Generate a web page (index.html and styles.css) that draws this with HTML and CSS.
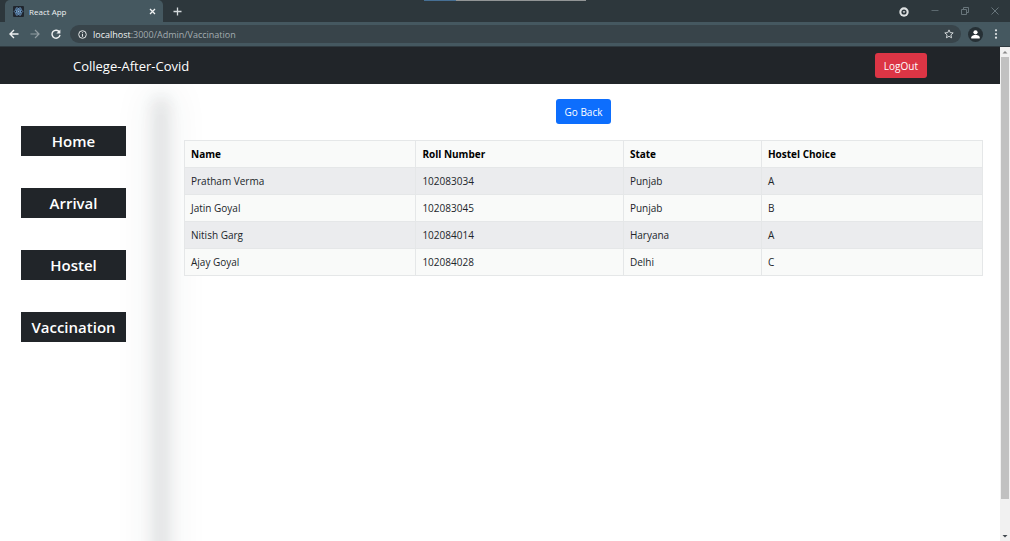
FILE: index.html
```html
<!DOCTYPE html>
<html lang="en">
<head>
<meta charset="utf-8">
<title>React App</title>
<link rel="stylesheet" href="styles.css">
</head>
<body>
<div class="window">
  <div class="tabstrip">
    <div class="tab">
      <svg class="favicon" width="11" height="11" viewBox="0 0 22 22" aria-hidden="true">
        <rect width="22" height="22" rx="2" fill="#20262e"/>
        <g fill="none" stroke="#6f9fd0" stroke-width="1.5">
          <ellipse cx="11" cy="11" rx="8.5" ry="3.4"/>
          <ellipse cx="11" cy="11" rx="8.5" ry="3.4" transform="rotate(60 11 11)"/>
          <ellipse cx="11" cy="11" rx="8.5" ry="3.4" transform="rotate(120 11 11)"/>
        </g>
        <circle cx="11" cy="11" r="1.8" fill="#8fbbe6"/>
      </svg>
      <span class="tab-title">React App</span>
      <button class="icon-btn" aria-label="Close tab">
        <svg width="7" height="7" viewBox="0 0 7 7"><path d="M1 1l5 5M6 1L1 6" stroke="#f0f2f3" stroke-width="1.3"/></svg>
      </button>
    </div>
    <button class="icon-btn new-tab" aria-label="New tab">
      <svg width="9" height="9" viewBox="0 0 9 9"><path d="M4.5 .5v8M.5 4.5h8" stroke="#d5dadd" stroke-width="1.3"/></svg>
    </button>
    <div class="loader"></div>
    <div class="window-controls">
      <button class="icon-btn" aria-label="Search tabs">
        <svg width="10" height="10" viewBox="0 0 10 10"><circle cx="5" cy="5" r="4.7" fill="#dfe2e3"/><circle cx="5" cy="5" r="2.600" fill="#2d373c"/><path d="M3.600 4.300h2.800L5 6.200z" fill="#dfe2e3"/></svg>
      </button>
      <button class="icon-btn" aria-label="Minimize">
        <svg width="8" height="8" viewBox="0 0 8 8"><path d="M.5 3.5h7" stroke="#5c696f"/></svg>
      </button>
      <button class="icon-btn" aria-label="Restore">
        <svg width="8" height="8" viewBox="0 0 8 8" fill="none" stroke="#68757b"><path d="M.5 2.5h5v5h-5zM2.5 2.5v-2h5v5h-2"/></svg>
      </button>
      <button class="icon-btn" aria-label="Close window">
        <svg width="8" height="8" viewBox="0 0 8 8"><path d="M.5 .5l7 7M7.5 .5l-7 7" stroke="#68757b"/></svg>
      </button>
    </div>
  </div>

  <div class="toolbar">
    <button class="icon-btn" aria-label="Back">
      <svg width="10" height="10" viewBox="0 0 10 10" fill="none" stroke="#eef0f1" stroke-width="1.4"><path d="M9.5 5H1.2M5 1L1 5l4 4"/></svg>
    </button>
    <button class="icon-btn" aria-label="Forward">
      <svg width="10" height="10" viewBox="0 0 10 10" fill="none" stroke="#929da2" stroke-width="1.2"><path d="M.5 5h8.3M5 1l4 4-4 4"/></svg>
    </button>
    <button class="icon-btn" aria-label="Reload">
      <svg width="10" height="10" viewBox="0 0 10 10"><path d="M8.4 3A4 4 0 1 0 9 5.8" fill="none" stroke="#eef0f1" stroke-width="1.4"/><path d="M9.4 .4v4H5.4z" fill="#eef0f1"/></svg>
    </button>
    <div class="address">
      <svg width="9" height="9" viewBox="0 0 9 9" aria-hidden="true"><circle cx="4.5" cy="4.5" r="3.8" fill="none" stroke="#e2e5e6"/><path d="M4.5 4v2.8M4.5 2.2v1" stroke="#e2e5e6" stroke-width="1.1"/></svg>
      <span class="url"><span class="host">localhost</span>:3000/Admin/Vaccination</span>
      <button class="icon-btn" aria-label="Bookmark">
        <svg width="10" height="10" viewBox="0 0 10 10"><path d="M5 .9l1.2 2.7 3 .3-2.3 2 .7 2.9L5 7.3 2.4 8.8l.7-2.9-2.3-2 3-.3z" fill="none" stroke="#cfd4d6"/></svg>
      </button>
    </div>
    <button class="icon-btn" aria-label="Profile">
      <svg width="15" height="15" viewBox="0 0 15 15"><circle cx="7.5" cy="7.5" r="7.5" fill="#263035"/><circle cx="7.5" cy="5.3" r="2.1" fill="#fff"/><path d="M3.3 11.5V10.200c0-1.600 2.800-2.200 4.200-2.200s4.200.6 4.200 2.200v1.300z" fill="#fff"/></svg>
    </button>
    <button class="icon-btn" aria-label="Menu">
      <svg width="4" height="10" viewBox="0 0 4 10" fill="#e3e6e7"><circle cx="2" cy="1.300" r="1.100"/><circle cx="2" cy="5" r="1.100"/><circle cx="2" cy="8.700" r="1.100"/></svg>
    </button>
  </div>

  <div class="viewport">
    <div class="page">
      <header class="navbar">
        <a class="brand" href="#">College-After-Covid</a>
        <button class="btn btn-danger">LogOut</button>
      </header>
      <div class="content">
        <nav class="sidebar">
          <a href="#">Home</a>
          <a href="#">Arrival</a>
          <a href="#">Hostel</a>
          <a href="#">Vaccination</a>
        </nav>
        <div class="divider"></div>
        <main class="main">
          <button class="btn btn-primary">Go Back</button>
          <table class="students">
            <colgroup><col class="col-name"><col class="col-roll"><col class="col-state"><col class="col-hostel"></colgroup>
            <thead>
              <tr><th>Name</th><th>Roll Number</th><th>State</th><th>Hostel Choice</th></tr>
            </thead>
            <tbody>
              <tr><td>Pratham Verma</td><td>102083034</td><td>Punjab</td><td>A</td></tr>
              <tr><td>Jatin Goyal</td><td>102083045</td><td>Punjab</td><td>B</td></tr>
              <tr><td>Nitish Garg</td><td>102084014</td><td>Haryana</td><td>A</td></tr>
              <tr><td>Ajay Goyal</td><td>102084028</td><td>Delhi</td><td>C</td></tr>
            </tbody>
          </table>
        </main>
      </div>
    </div>
    <div class="scrollbar" aria-hidden="true">
      <svg class="arrow" width="10" height="10" viewBox="0 0 10 10"><path d="M2.500 6.500L5 4l2.500 2.500z" fill="#8a8a8a"/></svg>
      <div class="thumb"></div>
      <svg class="arrow" width="10" height="10" viewBox="0 0 10 10"><path d="M2.500 4L5 6.500 7.500 4z" fill="#40484e"/></svg>
    </div>
  </div>
</div>
</body>
</html>
```

FILE: styles.css
```css
* { box-sizing: border-box; }

body {
  margin: 0;
  font-family: "Open Sans", "Noto Sans", sans-serif;
  font-size: 10px;
  color: #212529;
  background: #fff;
}

a { color: inherit; text-decoration: none; }

.window {
  display: flex;
  flex-direction: column;
  height: 100vh;
}

.icon-btn {
  display: flex;
  flex: none;
  padding: 0;
  border: 0;
  background: none;
}

/* Browser chrome */
.tabstrip {
  position: relative;
  display: flex;
  align-items: center;
  height: 22px;
  padding: 0 11px 0 5px;
  background: #2d373c;
}

.tab {
  display: flex;
  align-items: center;
  gap: 5px;
  width: 158px;
  height: 22px;
  padding: 0 7px 0 8px;
  border-radius: 5px 5px 0 0;
  background: #455860;
  color: #eef1f2;
  font-size: 8px;
}

.tab-title { flex: 1; }

.new-tab { margin-left: 10px; }

.loader {
  position: absolute;
  top: 0;
  left: 42%;
  width: 16%;
  height: 1px;
  background: linear-gradient(90deg, #466f94 20%, #929596 20%);
}

.window-controls {
  display: flex;
  align-items: center;
  gap: 22px;
  margin-left: auto;
  height: 20px;
}

.window-controls .icon-btn:first-child { padding-top: 2px; }

.toolbar {
  display: flex;
  align-items: center;
  gap: 11px;
  height: 25px;
  padding: 0 12px 0 9px;
  background: #455860;
  border-bottom: 1px solid #303b41;
}

.address {
  display: flex;
  flex: 1;
  align-items: center;
  gap: 6px;
  height: 18px;
  margin-left: -2px;
  margin-right: -4px;
  padding: 0 7px 0 8px;
  border-radius: 9px;
  background: #38444a;
}

.url { flex: 1; font-size: 9px; color: #a3acb0; }
.host { color: #f1f3f4; }

/* Page */
.viewport { display: flex; flex: 1; min-height: 0; }

.page {
  display: flex;
  flex: 1;
  flex-direction: column;
  overflow: hidden;
}

.navbar {
  position: relative;
  z-index: 1;
  display: flex;
  align-items: center;
  justify-content: space-between;
  height: 37px;
  padding: 0 73px;
  background: #212529;
}

.brand { color: #fff; font-size: 13px; }

.btn {
  height: 25px;
  padding: 0 9px;
  border: 0;
  border-radius: 3px;
  color: #fff;
  font: 10px "Open Sans", "Noto Sans", sans-serif;
}

.btn-danger { background: #dc3545; }
.btn-primary { background: #0d6efd; }

.content { display: flex; flex: 1; }

.sidebar {
  display: flex;
  flex-direction: column;
  gap: 32px;
  width: 147px;
  padding: 42px 21px;
}

.sidebar a {
  height: 30px;
  background: #212529;
  color: #fff;
  font-size: 15px;
  font-weight: 600;
  line-height: 31px;
  text-align: center;
}

.divider {
  width: 0;
  margin: 20px 23px -40px 14px;
  box-shadow: 0 0 16px 6px rgba(33, 37, 50, 0.13), 0 0 36px 12px rgba(40, 70, 60, 0.08);
}

.main {
  position: relative;
  display: flex;
  flex: 1;
  flex-direction: column;
  align-items: center;
  gap: 16px;
  padding: 15px 17px 0 0;
}

.students {
  width: 100%;
  table-layout: fixed;
  border-collapse: collapse;
  background: #f9faf9;
}

.col-name { width: 29%; }
.col-roll { width: 26%; }
.col-state { width: 17.3%; }
.col-hostel { width: 27.7%; }

.students th,
.students td {
  height: 27px;
  padding: 0 6px;
  border: 1px solid #e5e7e8;
  text-align: left;
}

.students th { font-weight: 700; color: #000; }
.students tbody tr:nth-child(odd) { background: #ebecee; }

.scrollbar {
  display: flex;
  flex-direction: column;
  width: 10px;
  background: #f1f1f1;
}

.arrow { flex: none; }

.thumb {
  height: 93%;
  max-height: calc(100% - 52px);
  margin: 0 1px auto;
  background: #c1c1c1;
}
```
